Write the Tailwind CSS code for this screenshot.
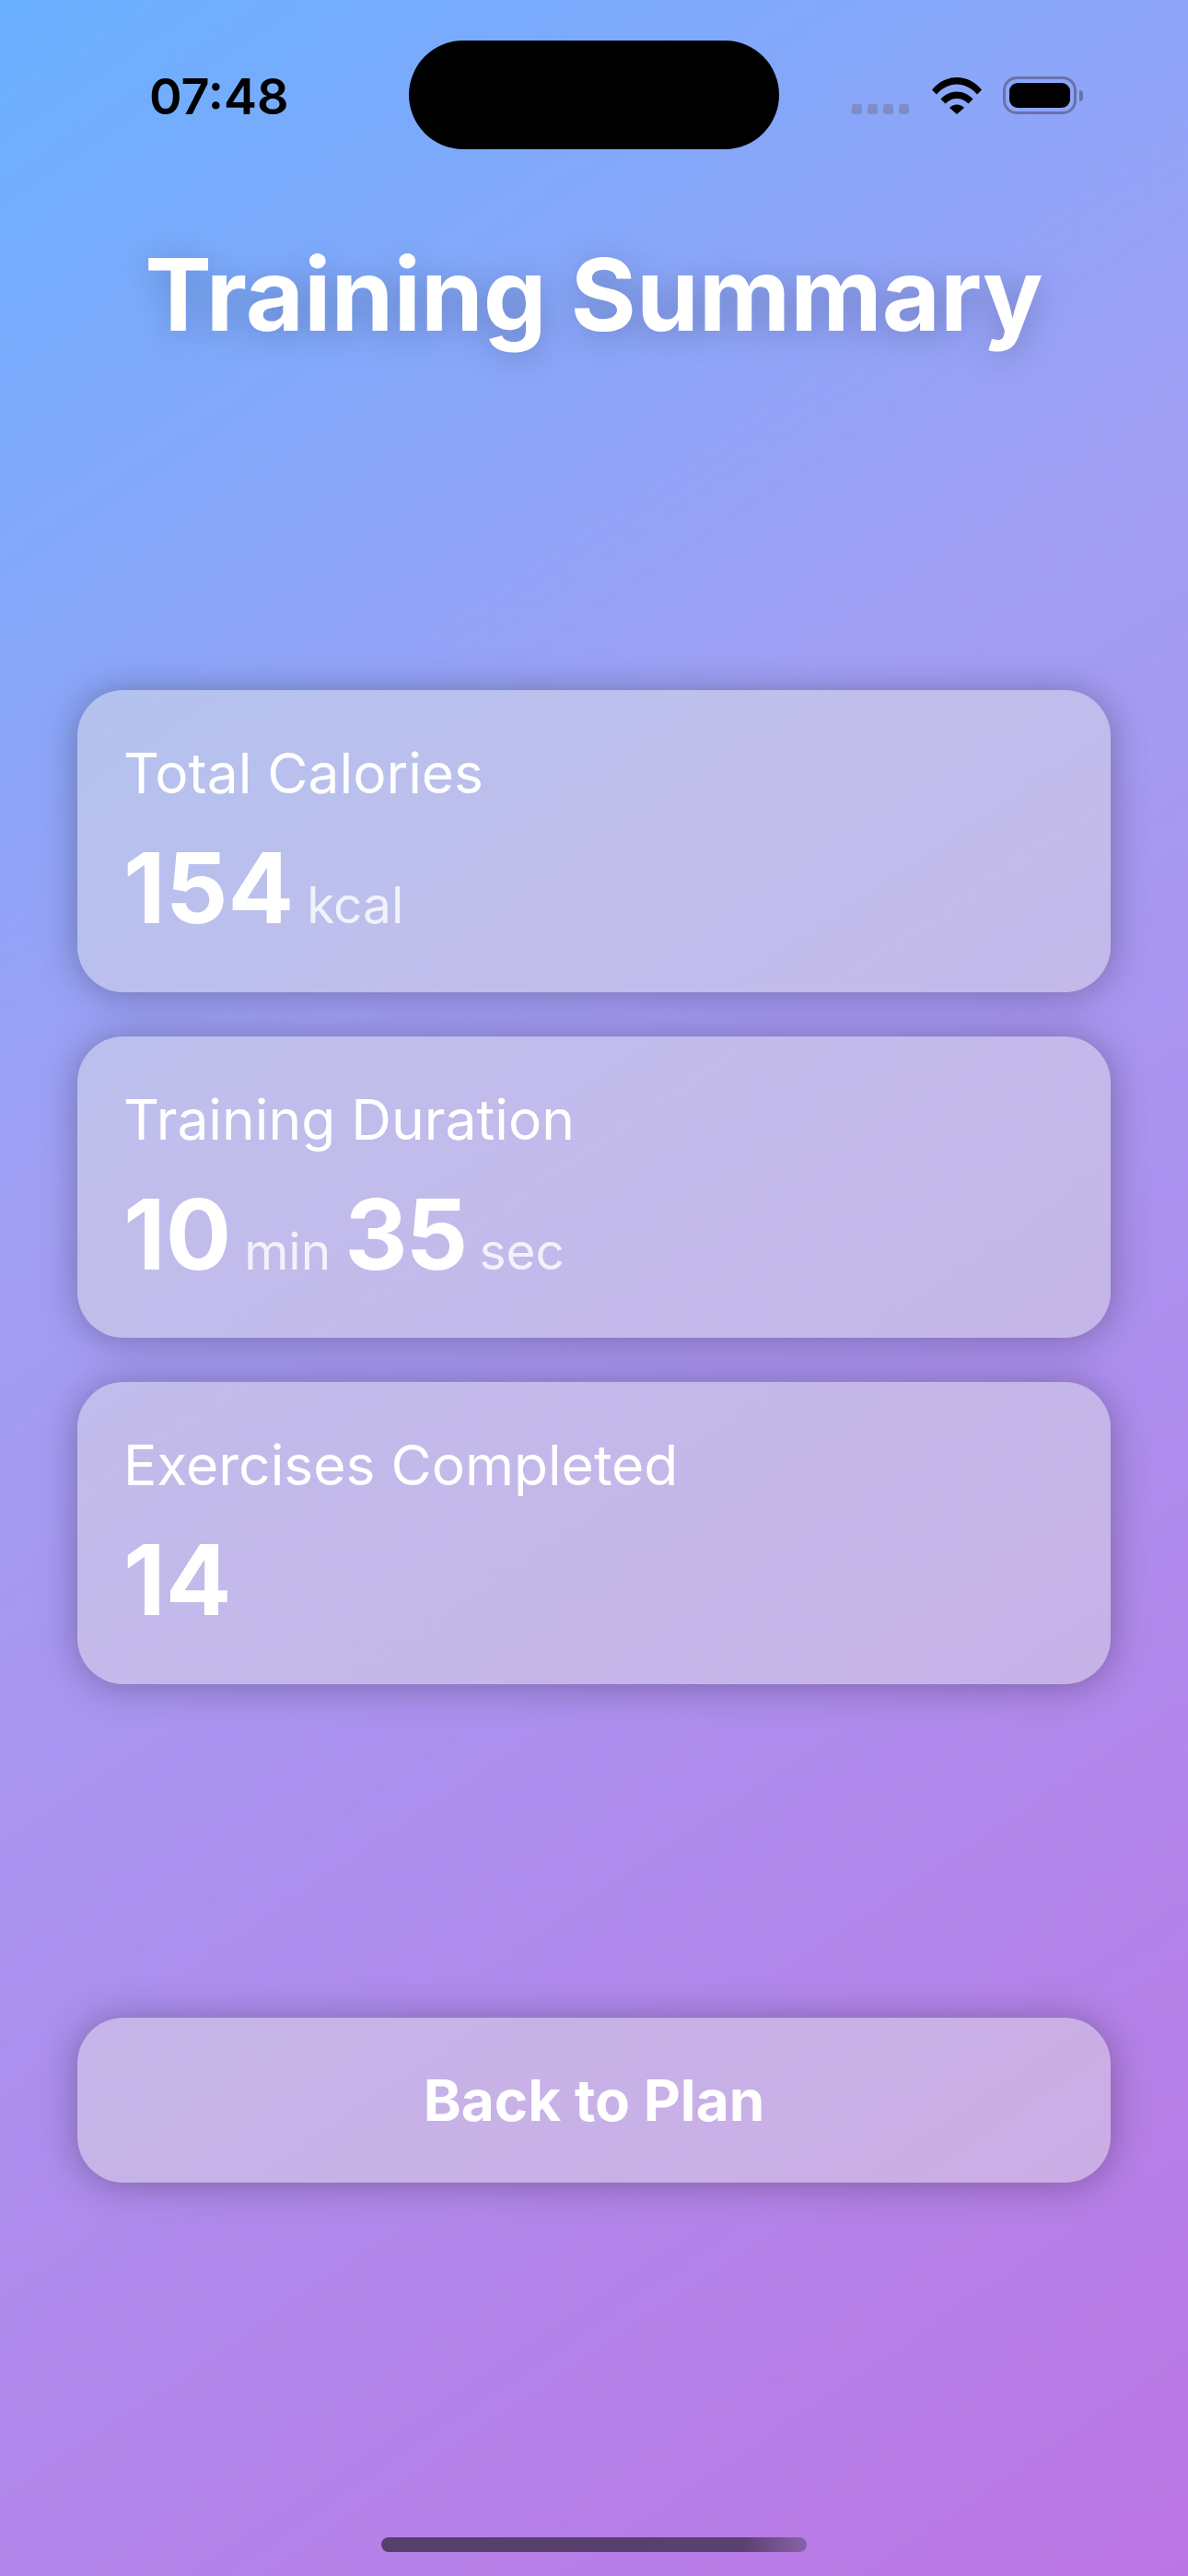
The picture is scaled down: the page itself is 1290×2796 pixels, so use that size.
<!DOCTYPE html>
<html>
<head>
<meta charset="utf-8">
<script src="https://cdn.jsdelivr.net/npm/@tailwindcss/browser@4"></script>
</head>
<body class="m-0">
<div class="relative w-[1290px] h-[2796px] overflow-hidden font-['Inter',sans-serif] text-white bg-[linear-gradient(146deg,#69b0ff_0%,#a29ff5_37%,#bc76e4_100%)]">
  <div class="h-[208px] pt-[44px] px-[84px] relative">
    <div class="absolute left-[162px] top-[70px] text-[54px] leading-[70px] font-semibold text-black">07:48</div>
    <div class="ml-[360px] w-[402px] h-[118px] rounded-full bg-black"></div>
    <div class="absolute left-[925px] top-[83px] flex items-end gap-[6px] h-[41px]">
      <span class="w-[11px] h-[11px] rounded-[3px] bg-[#7f8cc8]"></span>
      <span class="w-[11px] h-[11px] rounded-[3px] bg-[#7f8cc8]"></span>
      <span class="w-[11px] h-[11px] rounded-[3px] bg-[#7f8cc8]"></span>
      <span class="w-[11px] h-[11px] rounded-[3px] bg-[#7f8cc8]"></span>
      <svg class="ml-[19px]" width="54" height="40" viewBox="0 0 54 40"><path d="M0 13.500C7 5 16.500 0 27 0s20 5 27 13.500l-5 5C43 11.500 35.500 7.500 27 7.500s-16 4-22 11z M9.500 23.500C14 18.500 20 15.500 27 15.500s13 3 17.500 8l-5 5C36 25 32 23 27 23s-9 2-12.500 5.500z M19 33c2-2 5-3.500 8-3.500s6 1.500 8 3.500l-8 7z" fill="#000"/></svg>
      <div class="relative ml-[17px] w-[80px] h-[41px] rounded-[15px] border-[3px] border-[#6672ab] p-[4px]">
        <div class="w-full h-full rounded-[9px] bg-black"></div>
        <div class="absolute left-[80px] top-[12px] w-[4px] h-[12px] rounded-r-[4px] bg-[#6672ab]"></div>
      </div>
    </div>
    <h1 class="absolute left-0 right-0 top-[254px] text-center text-[109px] leading-[130px] font-bold [text-shadow:0_6px_36px_rgba(0,0,0,0.22)]">Training Summary</h1>
  </div>
  <div class="mt-[541px] mx-[84px] flex flex-col gap-[48px]">
    <div class="h-[327.5px] rounded-[50px] pl-[50px] pt-[54px] bg-[#e2e2e2]/47 shadow-[0_2px_40px_rgba(0,0,0,0.3)]">
      <div class="text-[60.5px] leading-[72px]">Total Calories</div>
      <div class="mt-[29px] flex items-baseline"><span class="text-[106px] leading-[120px] font-bold">154</span><span class="ml-[14px] text-[55px] text-white/80">kcal</span></div>
    </div>
    <div class="h-[327.5px] rounded-[50px] pl-[50px] pt-[54px] bg-[#e2e2e2]/47 shadow-[0_2px_40px_rgba(0,0,0,0.3)]">
      <div class="text-[60.5px] leading-[72px]">Training Duration</div>
      <div class="mt-[29px] flex items-baseline"><span class="text-[106px] leading-[120px] font-bold">10</span><span class="ml-[14px] text-[55px] text-white/80">min</span><span class="ml-[15px] text-[106px] leading-[120px] font-bold tracking-[-2px]">35</span><span class="ml-[14px] text-[55px] text-white/80">sec</span></div>
    </div>
    <div class="h-[327.5px] rounded-[50px] pl-[50px] pt-[54px] bg-[#e2e2e2]/47 shadow-[0_2px_40px_rgba(0,0,0,0.3)]">
      <div class="text-[60.5px] leading-[72px]">Exercises Completed</div>
      <div class="mt-[29px] flex items-baseline"><span class="text-[106px] leading-[120px] font-bold">14</span></div>
    </div>
  </div>
  <button class="block mt-[362.500px] mx-[84px] w-[1122px] h-[179px] rounded-[50px] bg-[#e2e2e2]/47 shadow-[0_2px_40px_rgba(0,0,0,0.3)] text-[62px] font-bold text-center">Back to Plan</button>
  <div class="absolute left-[414px] top-[2754px] w-[462px] h-[16px] rounded-full bg-[linear-gradient(90deg,#54406b_0%,#5a4170_85%,#8a62a8_100%)]"></div>
</div>
</body>
</html>
